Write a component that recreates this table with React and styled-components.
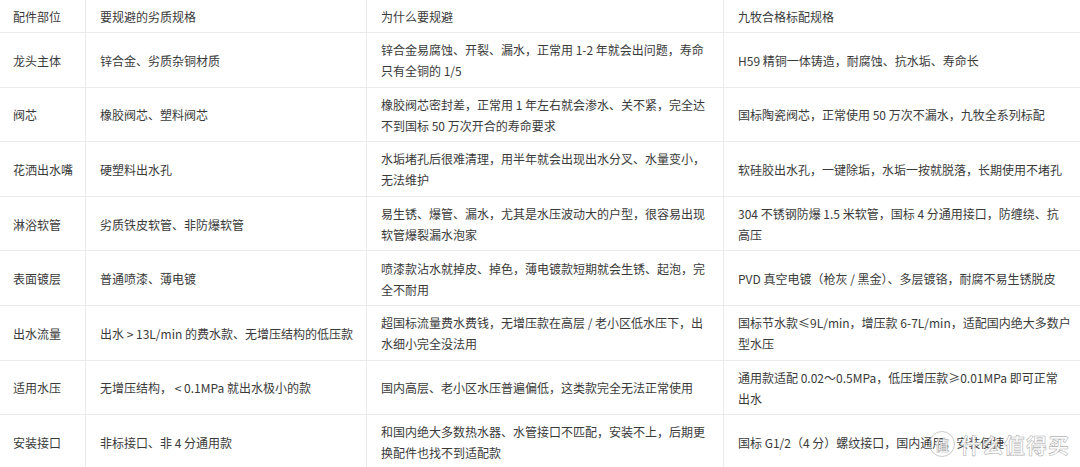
import styled, { createGlobalStyle } from 'styled-components'

const GlobalStyle = createGlobalStyle`
  html, body {
    margin: 0;
    padding: 0;
    background: #ffffff;
  }
  body {
    font-family: "Noto Sans CJK SC", "Noto Sans", sans-serif;
    color: #3a3a3a;
    overflow: hidden;
  }
`

const rows = [
  ['龙头主体', '锌合金、劣质杂铜材质', ['锌合金易腐蚀、开裂、漏水，正常用 1-2 年就会出问题，寿命', '只有全铜的 1/5'], ['H59 精铜一体铸造，耐腐蚀、抗水垢、寿命长']],
  ['阀芯', '橡胶阀芯、塑料阀芯', ['橡胶阀芯密封差，正常用 1 年左右就会渗水、关不紧，完全达', '不到国标 50 万次开合的寿命要求'], ['国标陶瓷阀芯，正常使用 50 万次不漏水，九牧全系列标配']],
  ['花洒出水嘴', '硬塑料出水孔', ['水垢堵孔后很难清理，用半年就会出现出水分叉、水量变小，', '无法维护'], ['软硅胶出水孔，一键除垢，水垢一按就脱落，长期使用不堵孔']],
  ['淋浴软管', '劣质铁皮软管、非防爆软管', ['易生锈、爆管、漏水，尤其是水压波动大的户型，很容易出现', '软管爆裂漏水泡家'], ['304 不锈钢防爆 1.5 米软管，国标 4 分通用接口，防缠绕、抗', '高压']],
  ['表面镀层', '普通喷漆、薄电镀', ['喷漆款沾水就掉皮、掉色，薄电镀款短期就会生锈、起泡，完', '全不耐用'], ['PVD 真空电镀（枪灰 / 黑金）、多层镀铬，耐腐不易生锈脱皮']],
  ['出水流量', '出水 > 13L/min 的费水款、无增压结构的低压款', ['超国标流量费水费钱，无增压款在高层 / 老小区低水压下，出', '水细小完全没法用'], ['国标节水款≤9L/min，增压款 6-7L/min，适配国内绝大多数户', '型水压']],
  ['适用水压', '无增压结构， < 0.1MPa 就出水极小的款', ['国内高层、老小区水压普遍偏低，这类款完全无法正常使用'], ['通用款适配 0.02～0.5MPa，低压增压款≥0.01MPa 即可正常', '出水']],
  ['安装接口', '非标接口、非 4 分通用款', ['和国内绝大多数热水器、水管接口不匹配，安装不上，后期更', '换配件也找不到适配款'], ['国标 G1/2（4 分）螺纹接口，国内通用，安装便捷']],
]

const header = ['配件部位', '要规避的劣质规格', '为什么要规避', '九牧合格标配规格']

function Lines({ lines }) {
  return (
    <Text>
      {lines.map((line, i) => (
        <Line key={i}>{line}</Line>
      ))}
    </Text>
  )
}

export default function App() {
  return (
    <>
      <GlobalStyle />
      <Page>
        <Grid>
          {header.map((h, i) => (
            <Cell key={`h-${i}`} $col={i} $head>
              {h}
            </Cell>
          ))}
          {rows.map((r, ri) => (
            [
              <Cell key={`r${ri}-0`} $col={0}>{r[0]}</Cell>,
              <Cell key={`r${ri}-1`} $col={1}>{r[1]}</Cell>,
              <Cell key={`r${ri}-2`} $col={2}><Lines lines={r[2]} /></Cell>,
              <Cell key={`r${ri}-3`} $col={3}><Lines lines={r[3]} /></Cell>,
            ]
          ))}
        </Grid>
        <Watermark>
          <Badge>值</Badge>
          <MarkText>什么值得买</MarkText>
        </Watermark>
      </Page>
    </>
  )
}

// STYLES
const Page = styled.div`
  position: relative;
  width: 1080px;
  height: 467px;
  overflow: hidden;
  background: #ffffff;
`

const Grid = styled.div`
  display: grid;
  grid-template-columns: 86px 281px 357px 356px;
  grid-template-rows: 33px repeat(8, 54.6px);
  font-size: 12px;
  line-height: 21px;
  color: #3a3a3a;
`

const Cell = styled.div`
  display: flex;
  align-items: center;
  box-sizing: border-box;
  min-width: 0;
  padding: ${(p) => (p.$head ? 0 : 1)}px ${(p) => (p.$col === 3 ? 10 : 14)}px 0 ${(p) => (p.$col === 0 ? 13 : 14)}px;
  border-bottom: 1px solid #ebebeb;
  border-right: ${(p) => (p.$col === 3 ? 'none' : '1px solid #ebebeb')};
  white-space: nowrap;
`

const Text = styled.div`
  display: flex;
  flex-direction: column;
`

const Line = styled.span`
  display: block;
`

const Watermark = styled.div`
  position: absolute;
  right: 10px;
  bottom: 8px;
  display: flex;
  align-items: center;
  gap: 5px;
  pointer-events: none;
`

const Badge = styled.span`
  display: flex;
  align-items: center;
  justify-content: center;
  width: 24px;
  height: 24px;
  border-radius: 50%;
  border: 1.5px solid rgba(190, 190, 190, 0.8);
  color: rgba(255, 255, 255, 0.9);
  -webkit-text-stroke: 0.6px rgba(170, 170, 170, 0.9);
  font-size: 14px;
  font-weight: 700;
`

const MarkText = styled.span`
  font-size: 21px;
  font-weight: 700;
  letter-spacing: 1px;
  color: rgba(255, 255, 255, 0.85);
  -webkit-text-stroke: 0.6px rgba(170, 170, 170, 0.9);
`
